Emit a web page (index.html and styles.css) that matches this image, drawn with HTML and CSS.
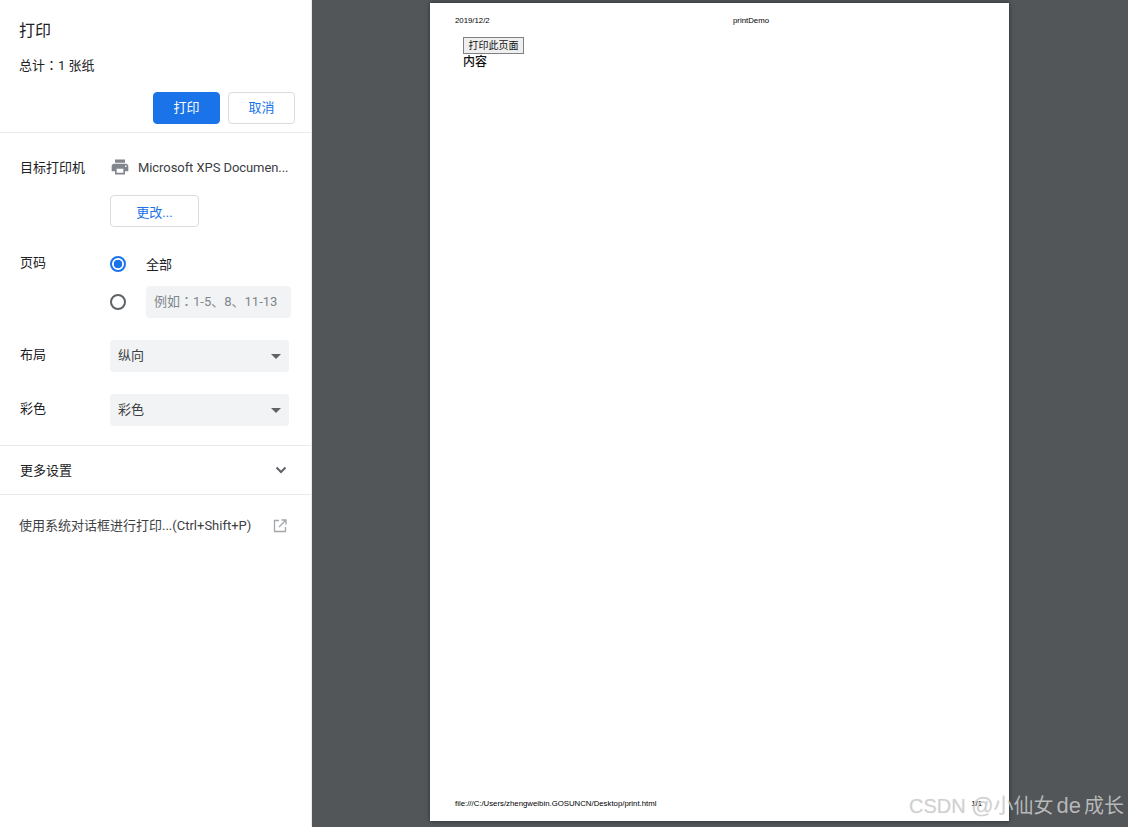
FILE: index.html
```html
<!DOCTYPE html>
<html lang="zh-CN">
<head>
<meta charset="utf-8">
<title>打印</title>
<link rel="stylesheet" href="styles.css">
</head>
<body>
<div class="app">
  <aside class="sidebar">
    <header class="head">
      <h1 class="title">打印</h1>
      <p class="summary">总计<span class="colon" lang="zh-TW">：</span>1 张纸</p>
      <div class="actions">
        <button class="btn btn-primary">打印</button>
        <button class="btn btn-cancel">取消</button>
      </div>
    </header>
    <section class="settings">
      <div class="row row-dest">
        <span class="label">目标打印机</span>
        <div class="dest">
          <svg class="printer" width="20" height="20" viewBox="0 0 24 24"><path fill="#80868b" d="M19 8H5c-1.66 0-3 1.34-3 3v6h4v4h12v-4h4v-6c0-1.66-1.34-3-3-3zm-3 11H8v-5h8v5zm3-7c-.55 0-1-.45-1-1s.45-1 1-1 1 .45 1 1-.45 1-1 1zm-1-9H6v4h12V3z"/></svg>
          <span class="dest-name">Microsoft XPS Documen...</span>
        </div>
      </div>
      <div class="row-change"><button class="btn btn-change">更改...</button></div>
      <div class="row row-pages">
        <span class="label">页码</span>
        <div class="pages">
          <div class="radio-line radio-all">
            <span class="radio radio-on"></span>
            <span class="radio-text">全部</span>
          </div>
          <div class="radio-line radio-custom">
            <span class="radio"></span>
            <span class="page-input"><span>例如<span class="colon" lang="zh-TW">：</span>1-5、8、11-13</span></span>
          </div>
        </div>
      </div>
      <div class="row row-select row-layout">
        <span class="label">布局</span>
        <div class="select"><span class="select-text">纵向</span><i class="caret"></i></div>
      </div>
      <div class="row row-select row-color">
        <span class="label">彩色</span>
        <div class="select"><span class="select-text">彩色</span><i class="caret"></i></div>
      </div>
    </section>
    <div class="more">
      <span class="more-text">更多设置</span>
      <svg width="20" height="20" viewBox="0 0 20 20"><path d="M5.500 7.500 10 12l4.500-4.500" fill="none" stroke="#5f6368" stroke-width="2"/></svg>
    </div>
    <div class="system">
      <span>使用系统对话框进行打印...(Ctrl+Shift+P)</span>
      <svg width="14" height="14" viewBox="0 0 14 14"><path d="M6 1.500H1.500v11h11V8M8.500 1H13v4.500M13 1 6 8" fill="none" stroke="#a3a6a9" stroke-width="1.300"/></svg>
    </div>
  </aside>
  <main class="preview">
    <article class="paper">
      <div class="paper-head">
        <span class="pdate">2019/12/2</span>
        <span class="ptitle">printDemo</span>
      </div>
      <div class="paper-body">
        <button class="demo-btn">打印此页面</button>
        <div class="demo-text">内容</div>
      </div>
      <div class="paper-foot">
        <span>file:///C:/Users/zhengweibin.GOSUNCN/Desktop/print.html</span>
        <span>1/1</span>
      </div>
    </article>
  </main>
</div>
<div class="watermark">CSDN <span class="wm-at">@</span>小仙女<span class="wm-de">de</span>成长</div>
</body>
</html>
```
FILE: styles.css
```css
* { box-sizing: border-box; }
html, body { margin: 0; height: 100%; overflow: hidden; }
body {
  font-family: Roboto, "Noto Sans CJK SC", "Liberation Sans", sans-serif;
  font-size: 13px;
  color: #202124;
  background: #525659;
}
.colon { font-family: "Noto Sans CJK TC", sans-serif; }
.app { display: flex; height: 827px; }
.sidebar {
  width: 312px;
  flex: none;
  background: #fff;
  border-right: 1px solid #e8eaed;
  display: flex;
  flex-direction: column;
}
.head {
  height: 133px;
  padding: 21px 16px 0 19px;
  border-bottom: 1px solid #e8eaed;
}
.title { margin: 0; font-size: 16px; line-height: 20px; font-weight: 400; }
.summary { margin: 14px 0 0; line-height: 20px; font-size: 13px; }
.actions { display: flex; justify-content: flex-end; gap: 8px; margin-top: 16px; }
.btn {
  font: inherit;
  height: 32px;
  width: 67px;
  padding: 0 0 3px;
  border-radius: 4px;
  border: 1px solid #dadce0;
  background: #fff;
  color: #1a73e8;
}
.btn-primary { background: #1a73e8; border-color: #1a73e8; color: #fff; }
.btn-change { padding: 1px 0 0; width: 89px; }
.settings { height: 313px; padding: 0 0 0 20px; border-bottom: 1px solid #e8eaed; }
.row { display: flex; }
.label { width: 90px; flex: none; line-height: 20px; }
.row-dest { padding-top: 25px; height: 62px; }
.row-dest .printer { margin-top: -1px; }
.dest { display: flex; align-items: flex-start; }
.printer { margin-right: 8px; flex: none; }
.dest-name { line-height: 20px; white-space: nowrap; color: #3c4043; letter-spacing: -.07px; }
.row-change { padding-left: 90px; }
.row-pages { padding-top: 26px; height: 113px; }
.pages { display: flex; flex-direction: column; }
.radio-line { display: flex; align-items: center; }
.radio-all { height: 20px; margin-top: 1px; }
.radio-text { padding-top: 1px; line-height: 20px; }
.radio-custom { height: 32px; margin-top: 12px; }
.radio {
  width: 16px; height: 16px;
  border: 2px solid #5f6368;
  border-radius: 50%;
  flex: none;
  margin-right: 20px;
  background: #fff;
}
.radio-on { border-color: #1a73e8; background: radial-gradient(circle, #1a73e8 0 4px, #fff 4.600px); }
.page-input {
  width: 145px; height: 32px;
  padding: 0 8px 3px;
  display: flex; align-items: center;
  background: #f1f3f4;
  border-radius: 4px;
  color: #80868b;
  white-space: nowrap;
}
.row-select { height: 54px; }
.row-select .label { padding-top: 5px; }
.select {
  width: 179px; height: 32px;
  padding: 0 8px;
  display: flex; align-items: center; justify-content: space-between;
  background: #f1f3f4;
  border-radius: 4px;
}
.select-text { margin-top: -3px; color: #3c4043; }
.caret {
  width: 0; height: 0;
  border-left: 5px solid transparent;
  border-right: 5px solid transparent;
  border-top: 5px solid #5f6368;
}
.more {
  height: 49px;
  padding: 0 20px 0 20px;
  display: flex; align-items: center; justify-content: space-between;
  border-bottom: 1px solid #e8eaed;
}
.more-text { margin-top: -2px; }
.system {
  padding: 21px 24px 0 19px;
  display: flex; align-items: center; justify-content: space-between;
  line-height: 20px;
  color: #3c4043;
}
.preview {
  flex: 1;
  min-width: 0;
  padding: 3px 0 0 118px;
  background: #525659;
}
.paper {
  width: 579px; height: 818px;
  background: #fff;
  box-shadow: 0 0 4px rgba(0,0,0,.5);
  display: flex;
  flex-direction: column;
  padding: 13px 27px 12px 25px;
  font-family: "Liberation Sans", "Noto Sans CJK SC", sans-serif;
  color: #000;
}
.paper-head { display: flex; font-size: 7.800px; line-height: 10px; }
.pdate { width: 278px; }
.paper-body { flex: 1; padding: 11px 0 0 8px; }
.demo-btn {
  display: block;
  width: 61px; height: 17px;
  padding: 0 0 2px;
  font: 10px/13px "Noto Sans CJK SC", sans-serif;
  color: #111;
  background: #efefef;
  border: 1px solid #808080;
  border-radius: 0;
}
.demo-text { font: 500 12px/14px "Noto Sans CJK SC", sans-serif; color: #111; }
.paper-foot { display: flex; justify-content: space-between; font-size: 7.800px; line-height: 10px; }
.watermark {
  position: absolute;
  right: 4px;
  bottom: 8px;
  font-size: 20px;
  line-height: 26px;
  font-family: "Liberation Sans", "Noto Sans CJK SC", sans-serif;
  color: rgba(205,205,205,.85);
  text-shadow: 0 0 1px rgba(0,0,0,.12);
}
.wm-at { font-size: 22px; }
.wm-de { font-size: 22px; padding: 0 3px; }
```
